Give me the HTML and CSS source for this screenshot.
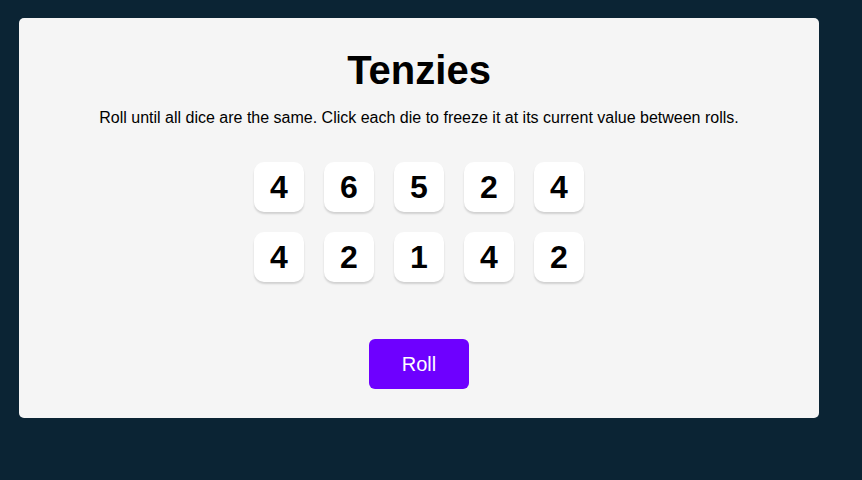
FILE: index.html
```html
<!DOCTYPE html>
<html>
<head>
<meta charset="utf-8">
<link rel="stylesheet" href="styles.css">
</head>
<body>
<main class="card">
  <h1 class="title">Tenzies</h1>
  <p class="instructions">Roll until all dice are the same. Click each die to freeze it at its current value between rolls.</p>
  <div class="dice">
    <button class="die">4</button>
    <button class="die">6</button>
    <button class="die">5</button>
    <button class="die">2</button>
    <button class="die">4</button>
    <button class="die">4</button>
    <button class="die">2</button>
    <button class="die">1</button>
    <button class="die">4</button>
    <button class="die">2</button>
  </div>
  <button class="roll">Roll</button>
</main>
</body>
</html>
```
FILE: styles.css
```css
html, body {
  margin: 0;
  height: 100%;
}
body {
  background: #0B2434;
  padding: 18px 0 0 19px;
  box-sizing: border-box;
  font-family: "Liberation Sans", Arial, sans-serif;
}
.card {
  width: 800px;
  height: 400px;
  box-sizing: border-box;
  background: #F5F5F5;
  border-radius: 5px;
  padding-top: 29px;
  display: flex;
  flex-direction: column;
  align-items: center;
}
.title {
  margin: 0;
  font-size: 40px;
  line-height: 46px;
  font-weight: 700;
  color: #000;
}
.instructions {
  margin: 16px 0 0;
  font-size: 16px;
  line-height: 18px;
  color: #000;
}
.dice {
  margin-top: 35px;
  display: grid;
  grid-template-columns: repeat(5, 50px);
  grid-auto-rows: 50px;
  gap: 20px;
}
.die {
  width: 50px;
  height: 50px;
  border: none;
  border-radius: 10px;
  background: #FFFFFF;
  box-shadow: 0 2px 2px rgba(0, 0, 0, 0.15);
  font-family: "Liberation Sans", Arial, sans-serif;
  font-size: 32px;
  font-weight: 700;
  color: #000;
  padding: 0;
}
.roll {
  margin-top: 57px;
  width: 100px;
  height: 50px;
  border: none;
  border-radius: 6px;
  background: #6E00FF;
  color: #FFFFFF;
  font-family: "Liberation Sans", Arial, sans-serif;
  font-size: 20px;
  padding: 0;
}
```
